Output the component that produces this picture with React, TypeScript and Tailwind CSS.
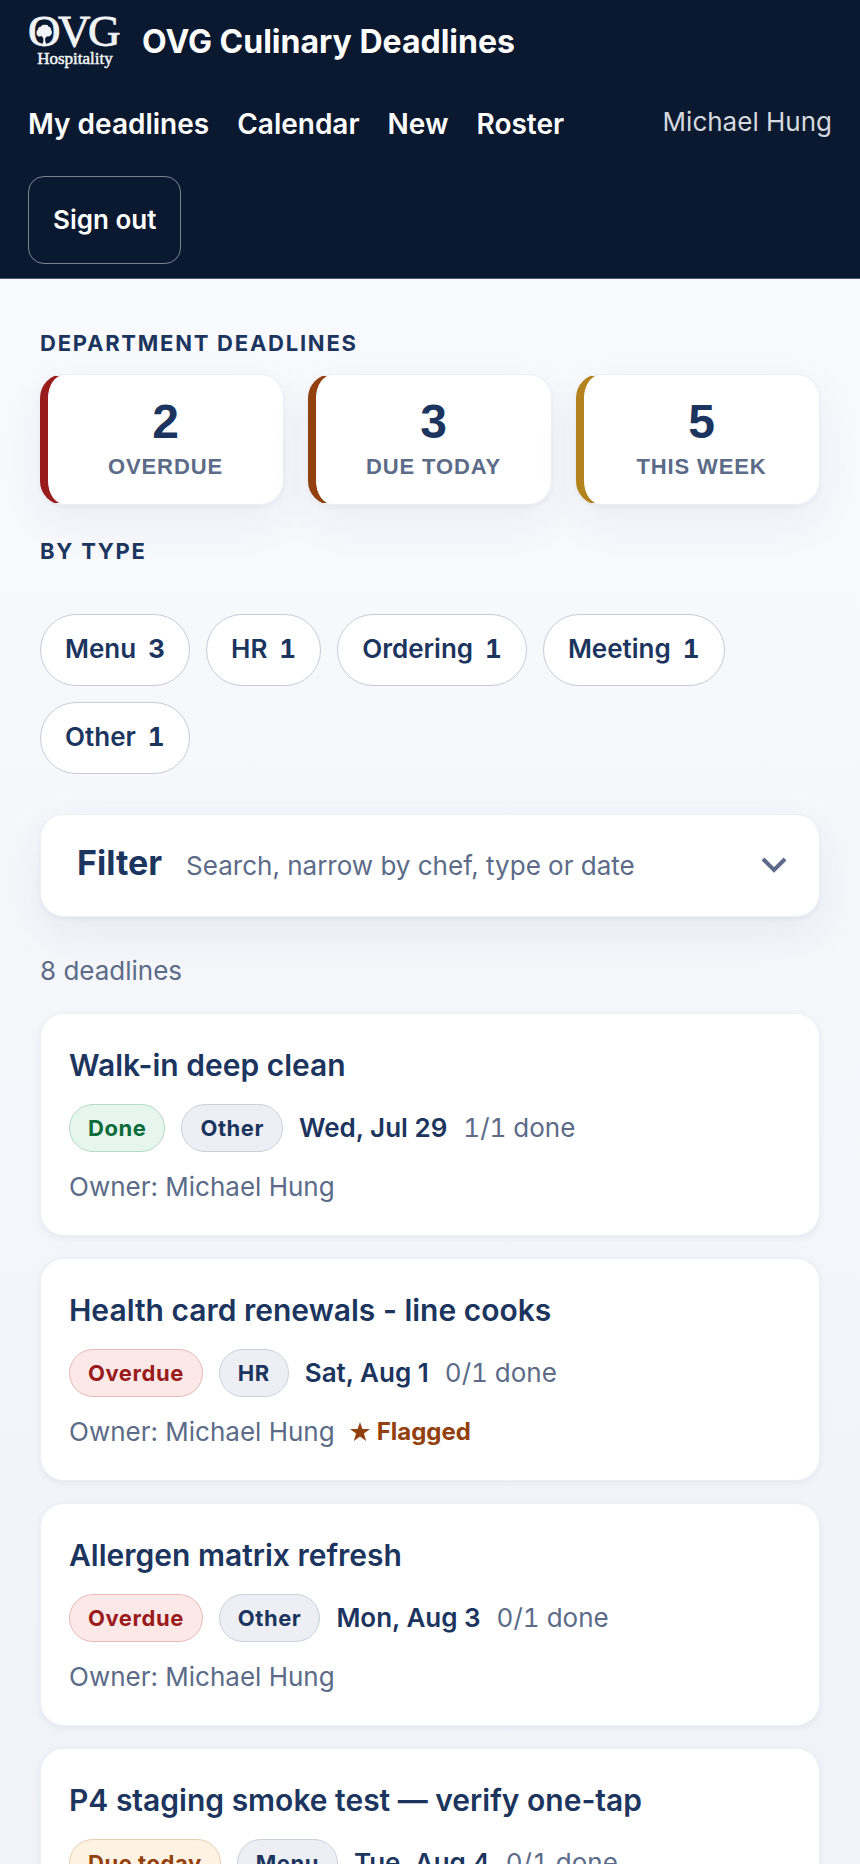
const links = ["My deadlines", "Calendar", "New", "Roster"]

const stats = [
  { count: 2, label: "Overdue", accent: "border-l-[#991b1b]" },
  { count: 3, label: "Due today", accent: "border-l-[#92400e]" },
  { count: 5, label: "This week", accent: "border-l-[#b5831e]" },
]

const types = [
  { name: "Menu", count: 3 },
  { name: "HR", count: 1 },
  { name: "Ordering", count: 1 },
  { name: "Meeting", count: 1 },
  { name: "Other", count: 1 },
]

const statusStyles = {
  Done: "bg-[#e6f6ec] border-[#b3dac3] text-[#0b6b3a]",
  Overdue: "bg-[#fde8e8] border-[#e9b9bb] text-[#991b1b]",
  "Due today": "bg-[#fef3e2] border-[#e8cdb0] text-[#92400e]",
}

type Deadline = {
  title: string
  status: keyof typeof statusStyles
  type: string
  date: string
  progress: string
  flagged?: boolean
}

const deadlines: Deadline[] = [
  { title: "Walk-in deep clean", status: "Done", type: "Other", date: "Wed, Jul 29", progress: "1/1 done" },
  { title: "Health card renewals - line cooks", status: "Overdue", type: "HR", date: "Sat, Aug 1", progress: "0/1 done", flagged: true },
  { title: "Allergen matrix refresh", status: "Overdue", type: "Other", date: "Mon, Aug 3", progress: "0/1 done" },
  { title: "P4 staging smoke test — verify one-tap", status: "Due today", type: "Menu", date: "Tue, Aug 4", progress: "0/1 done" },
]

const Logo = () => (
  <svg className="overflow-visible" width="94" height="56" viewBox="0 0 94 56" fill="#f1f3f6" stroke="#f1f3f6" role="img" aria-label="OVG Hospitality">
    <g fontFamily="'Liberation Serif', serif" fontSize="45" strokeWidth="0.8">
      <text x="0" y="32">O</text>
      <text x="30" y="32">V</text>
      <text x="60" y="32">G</text>
    </g>
    <g stroke="none" transform="translate(3.400 2) scale(0.75 0.9)">
      <path d="M7.500 21c-1.300-2.500-.6-4.600 1.200-5.600.1-2.400 2-3.700 3.900-3.400 1.100-2 3.500-3 5.400-2 2.300-1 4.400.2 5 2 2.100.1 3.500 1.700 3.300 3.600 1.500 1.300 1.500 4-.1 5.300-1.300 1.900-3.700 2-5.300 1.500l-2.500 2.200c-.3 2.300.2 4.300 1.400 6.400h-5c1-2.100 1.500-4.300 1-6.400l-2.300-2.300c-2.200.9-4.600.5-6-1.300z" />
    </g>
    <text x="47" y="50" textAnchor="middle" strokeWidth="0.5" fontFamily="'Liberation Serif', serif" fontSize="17">Hospitality</text>
  </svg>
)

const Header = () => (
  <header className="bg-[#0a1930] border-b border-[#4a566b] px-7 py-[14px] text-white">
    <div className="flex items-center gap-5 h-14">
      <Logo />
      <strong className="text-[32px] leading-10 font-bold">OVG Culinary Deadlines</strong>
    </div>
    <div className="mt-3 flex flex-wrap items-start gap-x-7 gap-y-[10px]">
      <nav className="flex flex-wrap gap-x-7">
        {links.map((link) => (
          <a key={link} href="#" className="h-[84px] flex items-center text-[28px] font-semibold">{link}</a>
        ))}
      </nav>
      <span className="ml-auto h-[78px] flex items-center text-[26px] text-[#d5d8de]">Michael Hung</span>
      <button className="h-[88px] px-6 pb-[2px] rounded-2xl border border-[#7b8494] text-[26px] font-semibold">Sign out</button>
    </div>
  </header>
)

const DeadlineCard = ({ title, status, type, date, progress, flagged }: Deadline) => (
  <li className="bg-white border border-[#eef0f5] rounded-3xl p-7 shadow-[0_2px_6px_rgba(28,53,94,0.07)]">
    <h3 className="text-[30px] leading-[46px] font-semibold">{title}</h3>
    <div className="mt-4 flex flex-wrap items-center gap-4 text-[26px] leading-10">
      <span className={`h-12 px-[18px] flex items-center rounded-full border text-[22px] font-bold tracking-wide ${statusStyles[status]}`}>{status}</span>
      <span className="h-12 px-[18px] flex items-center rounded-full border border-[#cbd0dc] bg-[#edeff4] text-[22px] font-bold tracking-wide">{type}</span>
      <span className="font-semibold">{date}</span>
      <span className="tabular-nums text-[#5b6b88]">{progress}</span>
    </div>
    <p className="mt-[15px] flex items-center gap-[14px] text-[26px] leading-10 text-[#5b6b88]">
      Owner: Michael Hung
      {flagged && (
        <span className="flex items-center gap-[6px] text-2xl leading-10 font-bold text-[#92400e]">
          <svg width="22" height="22" viewBox="0 0 22 22" fill="currentColor" aria-hidden="true">
            <path d="M11 1l2.400 7.100H21l-6.100 4.500 2.300 7.400-6.200-4.500L4.800 20l2.300-7.400L1 8.100h7.600z" />
          </svg>
          Flagged
        </span>
      )}
    </p>
  </li>
)

export default function App() {
  return (
    <div className="min-h-screen font-['Inter',sans-serif] text-[#1c355e] bg-linear-to-b from-[#fafbfe] to-[#f0f2f8]">
      <Header />

      <main className="px-10 pt-12">
        <h2 className="text-[22px] leading-8 font-bold uppercase tracking-[0.08em]">Department deadlines</h2>
        <div className="mt-[15px] grid grid-cols-3 gap-6 font-['Liberation_Sans',Arial,sans-serif]">
          {stats.map(({ count, label, accent }) => (
            <button key={label} className={`h-[131px] pt-[5px] flex flex-col items-center justify-center bg-white rounded-3xl border border-[#eef0f5] border-l-8 shadow-[0_2px_4px_rgba(28,53,94,0.05),0_16px_48px_rgba(28,53,94,0.06)] ${accent}`}>
              <span className="text-5xl leading-[50px] font-bold">{count}</span>
              <span className="text-[22px] leading-10 font-bold uppercase tracking-[0.04em] text-[#5b6b88]">{label}</span>
            </button>
          ))}
        </div>

        <h2 className="mt-[30px] text-[22px] leading-8 font-bold uppercase tracking-[0.08em]">By type</h2>
        <div className="mt-[47px] flex flex-wrap gap-4">
          {types.map(({ name, count }) => (
            <button key={name} className="h-[72px] px-6 pb-[3px] flex items-center gap-3 rounded-full border border-[#c6cbd9] bg-white text-[26px] font-semibold">
              {name} <span className="font-bold tabular-nums">{count}</span>
            </button>
          ))}
        </div>

        <button className="mt-10 w-full h-[103px] px-9 pb-[6px] flex items-center rounded-3xl border border-[#eef0f5] bg-white shadow-[0_2px_4px_rgba(28,53,94,0.05),0_16px_48px_rgba(28,53,94,0.07)]">
          <span className="flex items-baseline gap-6">
            <span className="text-[34px] font-bold">Filter</span>
            <span className="text-[26px] text-[#5b6b88]">Search, narrow by chef, type or date</span>
          </span>
          <svg className="ml-auto -mr-1 mt-1" width="26" height="16" viewBox="0 0 26 16" fill="none" stroke="#5b6b88" strokeWidth="4" aria-hidden="true">
            <path d="M2 2l11 11L24 2" />
          </svg>
        </button>

        <p className="mt-[34px] text-[26px] leading-10 text-[#5b6b88]">8 deadlines</p>

        <ul className="mt-[22px] pb-10 flex flex-col gap-[22px]">
          {deadlines.map((deadline) => (
            <DeadlineCard key={deadline.title} {...deadline} />
          ))}
        </ul>
      </main>
    </div>
  )
}
